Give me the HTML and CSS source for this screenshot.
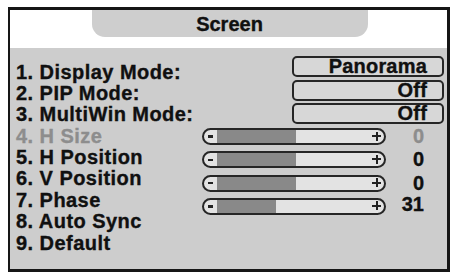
FILE: index.html
```html
<!DOCTYPE html>
<html>
<head>
<meta charset="utf-8">
<link rel="stylesheet" href="styles.css">
</head>
<body>
<div class="frame">
  <div class="header">
    <div class="tab">Screen</div>
  </div>
  <div class="panel">
    <div class="labels">
      <div class="label">1. Display Mode:</div>
      <div class="label">2. PIP Mode:</div>
      <div class="label">3. MultiWin Mode:</div>
      <div class="label dim">4. H Size</div>
      <div class="label">5. H Position</div>
      <div class="label">6. V Position</div>
      <div class="label">7. Phase</div>
      <div class="label">8. Auto Sync</div>
      <div class="label">9. Default</div>
    </div>
    <div class="controls">
      <div class="box">Panorama</div>
      <div class="box">Off</div>
      <div class="box">Off</div>
      <div class="sliders">
        <div class="srow">
          <div class="slider"><span class="minus"></span><span class="track"><span class="fill" style="width:79px"></span></span><span class="plus"></span></div>
          <div class="val dim">0</div>
        </div>
        <div class="srow">
          <div class="slider"><span class="minus"></span><span class="track"><span class="fill" style="width:79px"></span></span><span class="plus"></span></div>
          <div class="val">0</div>
        </div>
        <div class="srow">
          <div class="slider"><span class="minus"></span><span class="track"><span class="fill" style="width:79px"></span></span><span class="plus"></span></div>
          <div class="val">0</div>
        </div>
        <div class="srow">
          <div class="slider"><span class="minus"></span><span class="track"><span class="fill" style="width:59px"></span></span><span class="plus"></span></div>
          <div class="val up">31</div>
        </div>
      </div>
    </div>
  </div>
</div>
</body>
</html>
```

FILE: styles.css
```css
html, body {
  margin: 0;
  padding: 0;
  background: #ffffff;
}

.frame {
  margin: 7px 0 0 8px;
  width: 442px;
  height: 265px;
  box-sizing: border-box;
  border: 3px solid #161616;
  border-left-width: 2.5px;
  display: flex;
  flex-direction: column;
  font-family: "Liberation Sans", Arial, sans-serif;
  font-weight: bold;
  color: #101010;
  font-size: 20px;
  -webkit-text-stroke: 0.35px currentColor;
}

.header {
  height: 38px;
  flex: none;
  background: #ffffff;
  display: flex;
  justify-content: center;
  align-items: flex-start;
}

.tab {
  width: 276px;
  height: 27px;
  line-height: 28px;
  margin-left: 2px;
  background: #cecece;
  border-radius: 0 0 13px 13px;
  text-align: center;
  font-size: 20px;
}

.panel {
  flex: 1;
  background: #cdcdcd;
  display: grid;
  grid-template-columns: 192px 1fr;
}

.labels {
  padding: 13.5px 0 0 6px;
  display: flex;
  flex-direction: column;
}

.label {
  line-height: 21.4px;
  height: 21.4px;
  white-space: nowrap;
  letter-spacing: 0.45px;
}

.dim {
  color: #8d8d8d;
}

.controls {
  padding: 8px 3px 0 0;
  display: flex;
  flex-direction: column;
  align-items: flex-end;
}

.box {
  width: 152px;
  height: 21px;
  box-sizing: border-box;
  border: 2.5px solid #262626;
  border-radius: 5px;
  background: #d7d7d7;
  line-height: 16px;
  text-align: right;
  padding-right: 15px;
  margin-bottom: 2.5px;
  letter-spacing: 0.2px;
}

.sliders {
  align-self: stretch;
  margin-top: 1.5px;
  display: flex;
  flex-direction: column;
  gap: 6.3px;
}

.srow {
  display: flex;
  align-items: center;
  height: 17px;
}

.slider {
  width: 184px;
  height: 17px;
  box-sizing: border-box;
  border: 2.5px solid #262626;
  border-radius: 9px;
  background: #e3e3e3;
  display: flex;
  overflow: hidden;
}

.minus {
  width: 12.5px;
  flex: none;
  display: flex;
  align-items: center;
  justify-content: center;
}

.minus::before {
  content: "";
  width: 5px;
  height: 2.5px;
  background: #222;
}

.track {
  flex: 1;
  display: flex;
}

.fill {
  display: block;
  height: 100%;
  background: #898989;
}

.plus {
  width: 13.5px;
  flex: none;
  position: relative;
}

.plus::before,
.plus::after {
  content: "";
  position: absolute;
  background: #222;
}

.plus::before {
  left: 1.5px;
  top: 5px;
  width: 9px;
  height: 2px;
}

.plus::after {
  left: 5px;
  top: 1.5px;
  width: 2px;
  height: 9px;
}

.val {
  width: 38px;
  text-align: right;
  line-height: 17px;
}

.val.up {
  position: relative;
  top: -2px;
}
```
